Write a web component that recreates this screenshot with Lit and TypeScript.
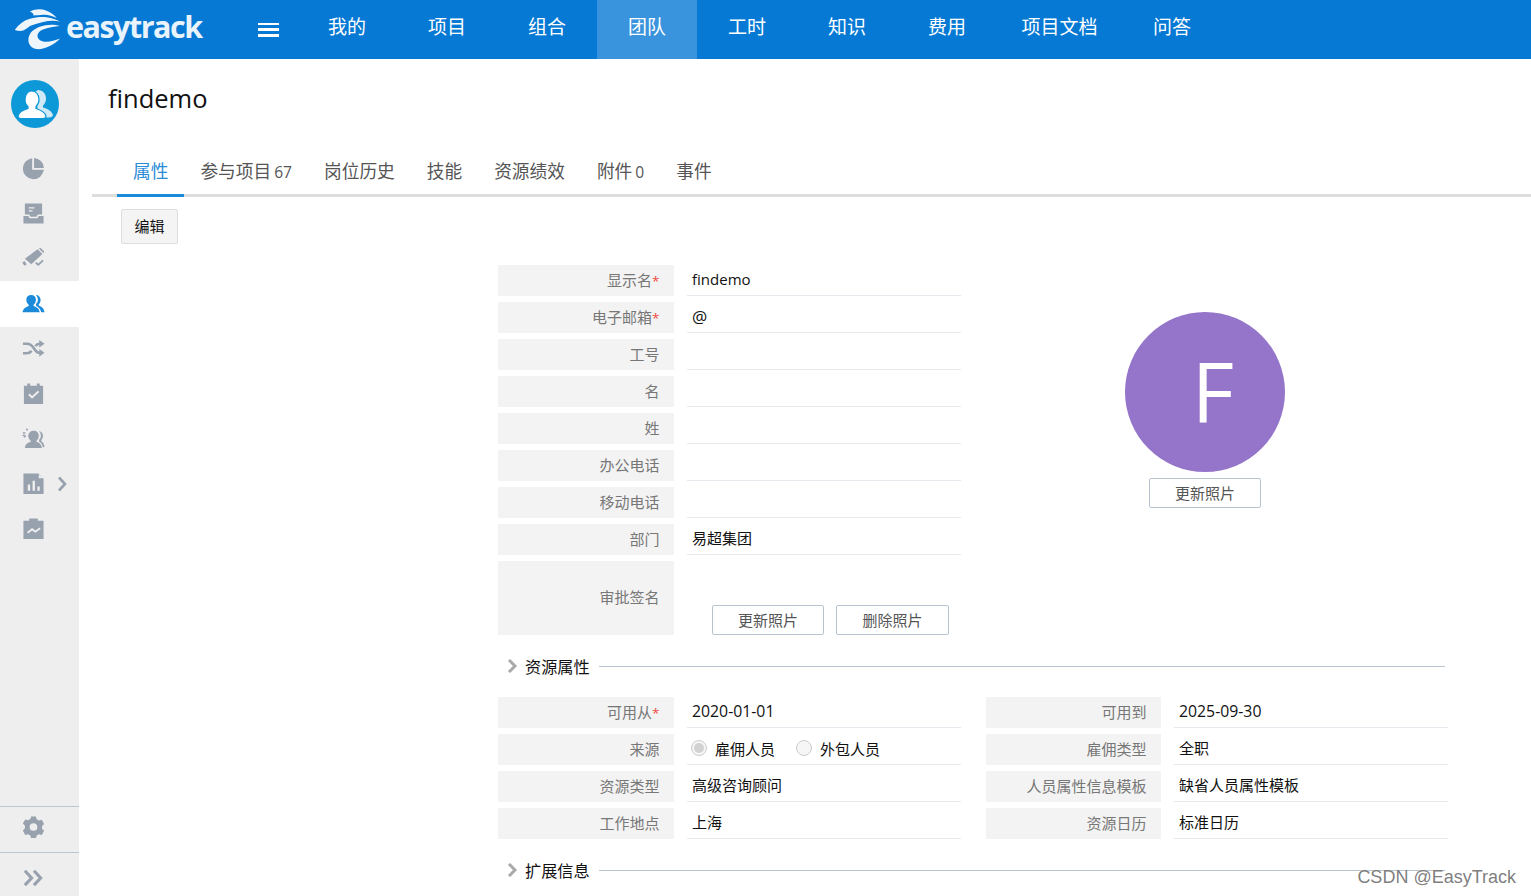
import { LitElement, html, css, svg } from "lit";
import { customElement } from "lit/decorators.js";

const NAV = [
  ["我的", false], ["项目", false], ["组合", false], ["团队", true], ["工时", false],
  ["知识", false], ["费用", false], ["项目文档", false], ["问答", false],
] as const;

const TABS: [string, string, boolean][] = [
  ["属性", "", true], ["参与项目", "67", false], ["岗位历史", "", false], ["技能", "", false],
  ["资源绩效", "", false], ["附件", "0", false], ["事件", "", false],
];

const ICONS = {
  pie: svg`<path d="M10.6 1.2A11 11 0 1 0 22.8 13.4H10.6Z"/><path d="M12.6 1.1A11 11 0 0 1 22.9 11.4H12.6Z"/>`,
  inbox: svg`<path fill-rule="evenodd" d="M3 1.500h18v11.500h-4.500l-1.500 2.500H9L7.500 13H3ZM7 5.500v1.300h6V5.500ZM7 8.500v1.300h4V8.500Z"/><path d="M1.500 14.500h5l1.500 2.500h8l1.500-2.500h5V22.500h-21Z"/>`,
  cam: svg`<path d="M3 12.300 16.300 2.300 21.300 7.300 9.700 18Z"/><path d="M17.500 1.500l2-.5 3.500 3.500-.5 2ZM.3 16.500 2.500 14.700 5 18l-2.500 1.500Z"/><path d="M14.200 16.500l2.800 2 5-4.500" fill="none" stroke="currentColor" stroke-width="1.900"/>`,
  users: svg`<path d="M9.500 3a5 5 0 0 1 5 5.200c0 2.300-1 4-2.400 5.100v1.200c3.400 1.300 5.900 2.900 6.400 6.500H.5c.5-3.600 3-5.200 6.500-6.500v-1.200C5.500 12.200 4.500 10.500 4.500 8.200A5 5 0 0 1 9.500 3Z"/><path d="M15 3.200c2.700.5 4.400 2.500 4.400 5.200 0 2-.8 3.600-2 4.600v1.200c2.900 1.200 5.500 2.800 6 6.800h-3.400c-.5-3-2.400-5.200-5.300-6.500v-2.200c1.200-1 1.900-2.200 1.900-4 0-2-.6-3.500-1.900-4.600Z"/>`,
  shuffle: svg`<path d="M1 7h4c4 0 6 2.500 7.500 5s3 4.500 6 4.500h1" fill="none" stroke="currentColor" stroke-width="2.700"/><path d="M1 17h4c2.300 0 3.800-1 5-2.500M14 9.500c1-1.500 2.500-2.500 4.500-2.500h1" fill="none" stroke="currentColor" stroke-width="2.700"/><path d="M18 3l5.500 4-5.500 4ZM18 12.500l5.500 4-5.500 4Z"/>`,
  cal: svg`<path fill-rule="evenodd" d="M2 4h3.500V1.500h3V4h7V1.500h3V4H22v19H2ZM6.500 13.500l4 4 7.500-7-1.500-1.500-6 5.500-2.500-2.500Z"/>`,
  team: svg`<path d="M12.500 4a5 5 0 0 1 5 5.200c0 2.300-1 3.900-2.300 5v1.300c2.800 1 5 2.400 5.500 6.500H3c.5-4 2.700-5.500 6-6.500v-1.300c-1.300-1.100-2.500-2.700-2.500-5A5.500 5.500 0 0 1 12.500 4Z"/><path d="M18.500 4.500c2.200.8 3.400 2.500 3.400 4.800 0 1.800-.7 3.200-1.800 4.200v1c1.600 1 3 2.900 3.400 6.200l-1.700.8c-.5-3-1.800-5.300-4-6.300v-2c1-1 1.900-2 1.900-3.800 0-2-.6-3.600-1.900-4.600Z"/><path d="M1 5.500h2.500v1.500H1ZM4 2l1.500-.6.800 2-1.500.6ZM1.500 10l2-1 .7 1.300-2 1ZM.5 8h3v1.300h-3Z"/>`,
  chart: svg`<path fill-rule="evenodd" d="M1.500 1.500h15.500l5.500 5.500V23h-21ZM17.500 2.500v4H22ZM6 13v6.500h2.500V13ZM11 9v10.500h2.500V9ZM16 15v4.500h2.500V15Z"/>`,
  board: svg`<path fill-rule="evenodd" d="M1.500 4h6V1.500h9V4h6v19h-21ZM5 15.500l1.500 1.700 4-3.200 3.500 2.500 5.500-4-1.200-1.500-4.300 3-3.500-2.500-4.500 3.500Z"/>`,
  gear: svg`<path fill-rule="evenodd" d="M9.500 1.500h5l.8 3 2.300 1.300 3-.8 2.500 4.300-2.200 2.200v2.800l2.200 2.200-2.500 4.300-3-.8-2.300 1.300-.8 3h-5l-.8-3-2.300-1.300-3 .8L.900 16.100l2.200-2.200v-2.800L.900 8.900l2.500-4.300 3 .8 2.300-1.300ZM12 8.500a4 4 0 1 0 0 8 4 4 0 0 0 0-8Z"/>`,
  dbl: svg`<path d="M3 5l7 7.500-7 7.500M12.500 5l7 7.500-7 7.500" fill="none" stroke="currentColor" stroke-width="3.200"/>`,
};

const SIDE: [keyof typeof ICONS, boolean, boolean][] = [
  ["pie", false, false], ["inbox", false, false], ["cam", false, false], ["users", true, false],
  ["shuffle", false, false], ["cal", false, false], ["team", false, false], ["chart", false, true], ["board", false, false],
];

const MAIN_ROWS: [string, boolean, string][] = [
  ["显示名", true, "findemo"], ["电子邮箱", true, "@"], ["工号", false, ""], ["名", false, ""],
  ["姓", false, ""], ["办公电话", false, ""], ["移动电话", false, ""], ["部门", false, "易超集团"],
];

const RES_LEFT: [string, boolean, string][] = [
  ["可用从", true, "2020-01-01"], ["来源", false, "@radio"], ["资源类型", false, "高级咨询顾问"], ["工作地点", false, "上海"],
];
const RES_RIGHT: [string, boolean, string][] = [
  ["可用到", false, "2025-09-30"], ["雇佣类型", false, "全职"], ["人员属性信息模板", false, "缺省人员属性模板"], ["资源日历", false, "标准日历"],
];

@customElement("app-root")
export class AppRoot extends LitElement {
  static styles = css`
    :host {
      display: block; height: 896px; overflow: hidden; position: relative; background: #fff;
      font-family: "Open Sans", "Noto Sans CJK SC", sans-serif; font-size: 15px; color: #111;
      font-variant-numeric: lining-nums;
    }
    .top { height: 59px; background: #0679d4; display: flex; align-items: center; color: #fff; }
    .logo { width: 15px; flex: none; }
    .mark { width: 48px; height: 46px; display: block; flex: none; }
    .word { font-family: "Open Sans", sans-serif; font-weight: 700; font-size: 30.500px; letter-spacing: -1.500px; width: 193px; margin-left: 3px; color: #e9f3fb; line-height: 53px; height: 59px; flex: none; }
    .burger { width: 21px; height: 14px; margin-left: -1px; margin-right: 18px; display: flex; flex-direction: column; justify-content: space-between; flex: none; }
    .burger i { display: block; height: 2.500px; background: #fff; }
    .nav { height: 59px; min-width: 100px; box-sizing: border-box; padding: 0 24.500px 7px; display: flex; align-items: center; justify-content: center; font-size: 19px; }
    .nav.on { background: #3a93dd; }

    .body { display: flex; height: 837px; }
    .side { width: 79px; flex: none; background: #eee; display: flex; flex-direction: column; color: #98a1ae; }
    .me { width: 48px; height: 48px; margin: 21px 0 18px 11px; flex: none; display: block; }
    .it { height: 45px; display: flex; align-items: center; padding-left: 22px; flex: none; }
    .it svg.ic { width: 23px; height: 23px; fill: currentColor; display: block; flex: none; }
    .it.on { background: #fff; color: #1a8ad9; height: 46px; margin-bottom: -1px; padding-bottom: 2px; box-sizing: border-box; }
    .arrow { width: 10px; height: 16px; margin-left: 12px; fill: none; stroke: #98a1ae; stroke-width: 2.600; }
    .grow { flex: 1; }
    .foot { border-top: 1px solid #b9c6d3; display: flex; align-items: center; padding-left: 22px; flex: none; box-sizing: border-box; }
    .foot.g { height: 46px; padding-bottom: 6px; }
    .foot.d { height: 44px; padding-top: 5px; }
    .foot svg { width: 23px; height: 23px; fill: currentColor; }

    .main { flex: 1; min-width: 0; }
    h1 { margin: 0; padding-left: 29px; font-weight: 400; font-size: 25.500px; line-height: 36px; padding-top: 21px; height: 60px; color: #111; box-sizing: content-box; }
    .tabs { margin: 5px 0 0 13px; height: 52px; box-sizing: border-box; border-bottom: 3px solid #ddd; display: flex; padding-left: 25px; }
    .tab { height: 52px; box-sizing: border-box; padding: 13px 16px 0; font-size: 17.700px; line-height: 26px; color: #555; border-bottom: 3px solid transparent; white-space: nowrap; }
    .tab small { font-size: 15.600px; margin-left: 3px; }
    .tab.on { color: #2b8cd6; border-bottom-color: #1a8ad9; }
    .edit { display: block; margin: 12px 0 0 42px; width: 57px; height: 35px; box-sizing: border-box; background: #f4f4f4; border: 1px solid #ddd; border-radius: 2px; font: inherit; color: #111; padding: 0 0 2px; }

    .form { margin: 21px 0 0 419px; width: 950px; }
    .head { display: flex; }
    .col { width: 463px; flex: none; display: flex; flex-direction: column; gap: 6px; }
    .row { display: flex; height: 31px; }
    .lab { width: 176px; flex: none; background: #f3f3f3; color: #777; text-align: right; padding-right: 14.500px; box-sizing: border-box; line-height: 31px; white-space: nowrap; }
    .lab b { color: #f0483e; font-weight: 400; font-size: 13.500px; }
    .val { flex: 1; margin-left: 13px; border-bottom: 1px solid #e8e8ee; padding: 0 0 4px 5px; white-space: nowrap; display: flex; align-items: center; }
    .val .date { font-size: 15.800px; margin-top: 2px; }
    .val .lat { margin-top: 2px; }
    .val .at { font-size: 17px; margin-top: 2px; }
    .sign { height: 74px; }
    .sign .lab { line-height: 72px; }
    .sign .btns { flex: 1; display: flex; gap: 12px; align-items: flex-end; margin-left: 38px; }
    .ghost { width: 112px; height: 30px; box-sizing: border-box; background: #fff; border: 1px solid #b8c4d0; border-radius: 2px; font: inherit; color: #555; padding: 0 0 2px; flex: none; }
    .ghost.w { width: 113px; }
    .photo { margin-left: 164px; width: 160px; display: flex; flex-direction: column; align-items: center; padding-top: 47px; }
    .circle { width: 160px; height: 160px; box-sizing: border-box; padding-left: 16px; border-radius: 50%; background: #9575c9; color: #fff; font-family: "Open Sans", sans-serif; font-size: 82px; line-height: 156px; text-align: center; }
    .photo .ghost { margin-top: 6px; }

    .sec { display: flex; align-items: center; height: 20px; width: 947px; font-size: 16.200px; color: #111; }
    .sec span { position: relative; top: -1px; }
    .sec svg { width: 10px; height: 14px; margin: -2px 8px 0 9px; fill: none; stroke: #a8a8a8; stroke-width: 3; flex: none; }
    .sec i { flex: 1; height: 1px; background: #b8c4d0; margin: -2px 0 0 9px; }
    .sec.a { margin-top: 22px; }
    .sec.b { margin-top: 22px; }
    .two { display: flex; gap: 25px; margin-top: 20px; }
    .two .col + .col { width: 462px; }
    .two .col + .col .lab { width: 175px; }
    .radios { display: flex; align-items: center; margin: 2px 0 0 -1px; }
    .dot { width: 14px; height: 14px; border-radius: 50%; border: 1px solid #ccc; background: #f6f6f6; margin-right: 8px; box-sizing: content-box; flex: none; display: flex; align-items: center; justify-content: center; }
    .dot.on::after { content: ""; width: 10px; height: 10px; border-radius: 50%; background: #d2d2d2; }
    .radios span { margin-right: 21px; }
    .mark2 { position: absolute; right: 15px; top: 864px; font-family: "Liberation Sans", sans-serif; font-size: 18px; line-height: 26px; color: rgba(110,110,110,.9); text-shadow: 0 0 1px rgba(255,255,255,.7); }
  `;

  value(v: string) {
    if (v === "@radio") {
      return html`<div class="radios"><div class="dot on"></div><span>雇佣人员</span><div class="dot"></div><span>外包人员</span></div>`;
    }
    if (v === "@") return html`<span class="at">@</span>`;
    if (/^\d/.test(v)) return html`<span class="date">${v}</span>`;
    if (/^[a-z]/.test(v)) return html`<span class="lat">${v}</span>`;
    return v;
  }

  row(r: [string, boolean, string]) {
    const [label, req, value] = r;
    return html`<div class="row">
      <div class="lab">${label}${req ? html`<b>*</b>` : ""}</div>
      <div class="val">${this.value(value)}</div>
    </div>`;
  }

  chev() {
    return html`<svg viewBox="0 0 10 14"><path d="M2 1l6 6-6 6"/></svg>`;
  }

  render() {
    return html`
      <div class="top">
        <div class="logo"></div>
        <svg class="mark" viewBox="0 0 48 46">
          <path fill="#eef6fc" d="M15 4.500C20 2 26 1.500 31 3.500c4.500 1.500 8.500 4.500 10.700 7.500-4-2-9-3.500-13.400-3.200-3.500.2-7 .7-10 .7 1-1.500-1.500-3-3.300-4Z"/>
          <path fill="#eef6fc" d="M0 22.500C4 17 9 13.500 15 11.800c6-1.800 11.500-2.300 16.700-1.600 5 .7 10 2.300 13.300 4.300-6-1.200-11.500-.8-16.700.5-5.500 1.300-10 2.800-13.300 4-2 1.500-4.500 3.500-6.700 4.500-3 .8-5.700.3-8.300-.5Z"/>
          <path fill="#eef6fc" d="M45 19C36 16 22 18 15.500 26 11 33 14 41 21 42c8 1 18-4 24-10.500-7 3-15 4.500-19.500 2-5-3.500-3.500-8.500 2.500-11 5-2 11-3 17-3.500Z"/>
        </svg>
        <div class="word">easytrack</div>
        <div class="burger"><i></i><i></i><i></i></div>
        ${NAV.map(([n, on]) => html`<div class="nav ${on ? "on" : ""}">${n}</div>`)}
      </div>
      <div class="body">
        <div class="side">
          <svg class="me" viewBox="0 0 48 48">
            <circle cx="24" cy="24" r="24" fill="#0d98d8"/>
            <path fill="#cfe9f7" d="M27 10c4.500 0 8 3.500 8 8.500 0 3-1.300 5.500-3 7v2c4 1.300 8.500 3 10 7.500 0 1.500-2 2.500-4 2.500H28L24 12Z"/>
            <path fill="#fff" stroke="#0d98d8" stroke-width="1.200" d="M20.500 11c4.500 0 7.500 3.500 7.500 8.500 0 3-1.300 5.500-3 7v2c4 1.300 9 3 10 7.500 0 1.500-1.500 2.500-3 2.500H10c-2 0-3-1-3-2.500 1-4.500 6-6.300 10-7.500v-2c-2-1.500-3-4-3-7 0-5 3-8.500 6.500-8.500Z"/>
          </svg>
          ${SIDE.map(([k, on, more]) => html`<div class="it ${on ? "on" : ""}">
            <svg class="ic" viewBox="0 0 24 24">${ICONS[k]}</svg>
            ${more ? html`<svg class="arrow" viewBox="0 0 10 16"><path d="M2 1.500l6 6.500-6 6.500"/></svg>` : ""}
          </div>`)}
          <div class="grow"></div>
          <div class="foot g"><svg viewBox="0 0 24 24">${ICONS.gear}</svg></div>
          <div class="foot d"><svg viewBox="0 0 24 24">${ICONS.dbl}</svg></div>
        </div>
        <div class="main">
          <h1>findemo</h1>
          <div class="tabs">
            ${TABS.map(([t, n, on]) => html`<div class="tab ${on ? "on" : ""}">${t}${n ? html`<small>${n}</small>` : ""}</div>`)}
          </div>
          <button class="edit">编辑</button>
          <div class="form">
            <div class="head">
              <div class="col">
                ${MAIN_ROWS.map((r) => this.row(r))}
                <div class="row sign">
                  <div class="lab">审批签名</div>
                  <div class="btns"><button class="ghost">更新照片</button><button class="ghost w">删除照片</button></div>
                </div>
              </div>
              <div class="photo">
                <div class="circle">F</div>
                <button class="ghost">更新照片</button>
              </div>
            </div>
            <div class="sec a">${this.chev()}<span>资源属性</span><i></i></div>
            <div class="two">
              <div class="col">${RES_LEFT.map((r) => this.row(r))}</div>
              <div class="col">${RES_RIGHT.map((r) => this.row(r))}</div>
            </div>
            <div class="sec b">${this.chev()}<span>扩展信息</span><i></i></div>
          </div>
        </div>
      </div>
      <div class="mark2">CSDN @EasyTrack</div>
    `;
  }
}
